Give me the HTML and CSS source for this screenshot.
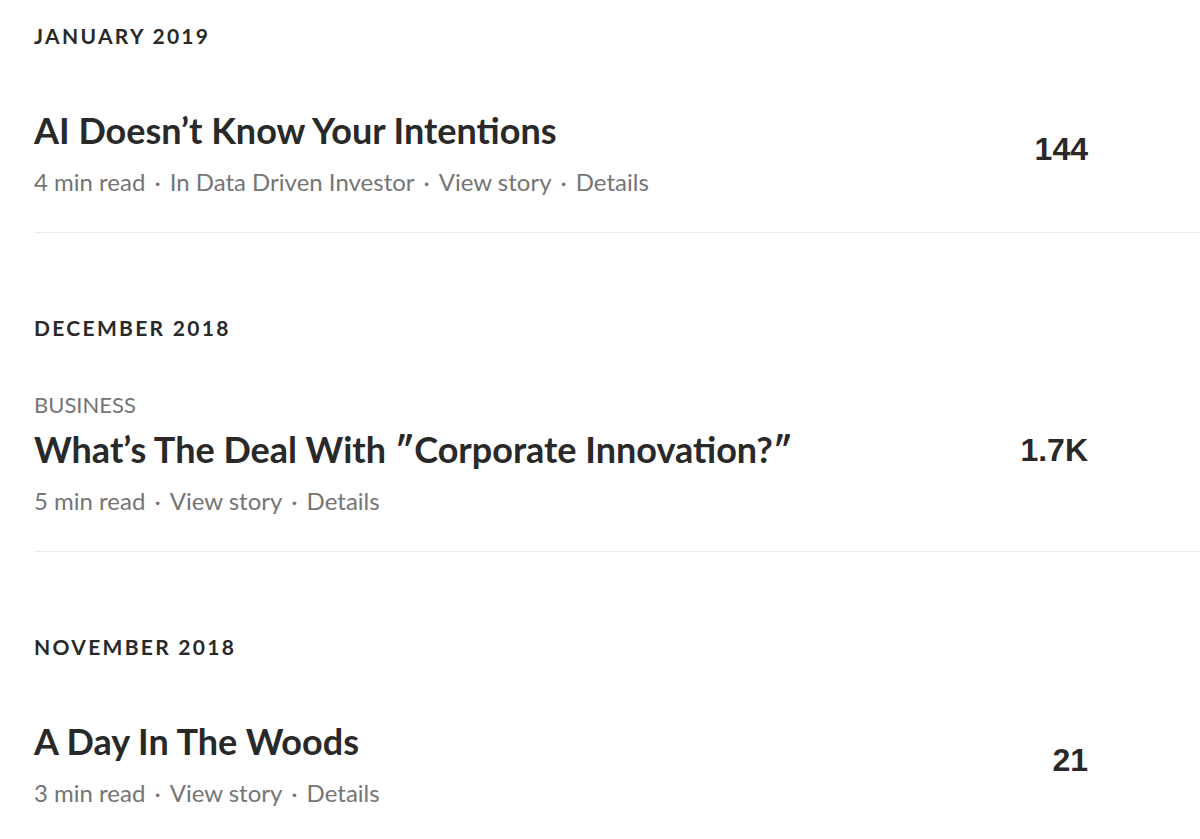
FILE: index.html
```html
<!DOCTYPE html>
<html lang="en">
<head>
<meta charset="utf-8">
<title>Stories</title>
<link rel="stylesheet" href="styles.css">
</head>
<body>
<main class="list">
  <section class="group">
    <h2 class="month">January 2019</h2>
    <article class="story">
      <div class="story-main">
        <h3 class="title">AI Doesn’t Know Your Intentions</h3>
        <p class="meta">4 min read<span class="dot">·</span>In Data Driven Investor<span class="dot">·</span>View story<span class="dot">·</span>Details</p>
      </div>
      <div class="count">144</div>
    </article>
  </section>
  <section class="group">
    <h2 class="month">December 2018</h2>
    <article class="story story-tagged">
      <div class="story-main">
        <div class="tag">BUSINESS</div>
        <h3 class="title">What’s The Deal With ″Corporate Innovation?″</h3>
        <p class="meta">5 min read<span class="dot">·</span>View story<span class="dot">·</span>Details</p>
      </div>
      <div class="count">1.7K</div>
    </article>
  </section>
  <section class="group">
    <h2 class="month">November 2018</h2>
    <article class="story">
      <div class="story-main">
        <h3 class="title">A Day In The Woods</h3>
        <p class="meta">3 min read<span class="dot">·</span>View story<span class="dot">·</span>Details</p>
      </div>
      <div class="count">21</div>
    </article>
  </section>
</main>
</body>
</html>
```
FILE: styles.css
```css
html, body {
  margin: 0;
  padding: 0;
  background: #ffffff;
}
body {
  font-family: Lato, "Open Sans", sans-serif;
  color: #292929;
}
.list {
  padding-left: 34px;
}
.group {
  display: flex;
  flex-direction: column;
}
.month {
  margin: 0;
  padding-top: 24px;
  font-size: 21px;
  line-height: 24px;
  font-weight: 700;
  letter-spacing: 2.3px;
  text-transform: uppercase;
  color: #292929;
}
.group + .group .month {
  padding-top: 83px;
}
.story {
  display: flex;
  align-items: center;
  margin-top: 60px;
  padding-bottom: 36px;
  border-bottom: 1px solid #ececec;
}
.story-tagged {
  margin-top: 51px;
}
.group:last-child .story {
  border-bottom: none;
}
.story-main {
  flex: 1;
  display: flex;
  flex-direction: column;
}
.tag {
  font-size: 22px;
  line-height: 28px;
  color: #757575;
  margin-bottom: 8px;
}
.title {
  margin: 0;
  font-size: 36px;
  line-height: 44px;
  font-weight: 700;
  color: #292929;
}
.meta {
  margin: 16px 0 0;
  font-size: 24px;
  line-height: 28px;
  color: #757575;
}
.dot {
  margin: 0 9px;
}
.count {
  width: 112px;
  margin-right: 112px;
  text-align: right;
  font-family: "Liberation Sans", Arial, sans-serif;
  font-weight: 700;
  font-size: 32px;
  color: #292929;
  padding-bottom: 6px;
}
```
